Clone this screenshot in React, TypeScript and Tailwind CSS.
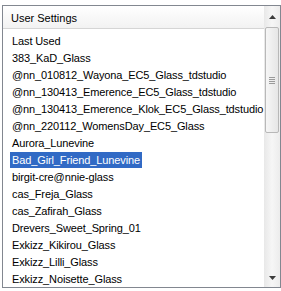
const items = [
  'Last Used',
  '383_KaD_Glass',
  '@nn_010812_Wayona_EC5_Glass_tdstudio',
  '@nn_130413_Emerence_EC5_Glass_tdstudio',
  '@nn_130413_Emerence_Klok_EC5_Glass_tdstudio',
  '@nn_220112_WomensDay_EC5_Glass',
  'Aurora_Lunevine',
  'Bad_Girl_Friend_Lunevine',
  'birgit-cre@nnie-glass',
  'cas_Freja_Glass',
  'cas_Zafirah_Glass',
  'Drevers_Sweet_Spring_01',
  'Exkizz_Kikirou_Glass',
  'Exkizz_Lilli_Glass',
  'Exkizz_Noisette_Glass',
]

const selected = 'Bad_Girl_Friend_Lunevine'

function Arrow({ down = false }: { down?: boolean }) {
  return (
    <svg width="7" height="4" viewBox="0 0 7 4" className={down ? 'rotate-180' : ''}>
      <polygon points="3.5,0 7,4 0,4" fill="#3c3c3c" />
    </svg>
  )
}

export default function App() {
  return (
    <div
      className="w-[281px] h-[291px] bg-white pt-[5px] pl-[2px] overflow-hidden"
      style={{ fontFamily: '"Liberation Sans", Arial, sans-serif' }}
    >
      <div className="w-[279px] h-[283px] border border-[#828790] flex bg-white">
        {/* list column */}
        <div className="flex-1 flex flex-col min-w-0">
          <div className="h-[24px] flex items-center pl-[8px] pt-[3px] text-[11px] text-black bg-[linear-gradient(to_bottom,#ffffff,#f2f2f2)] border-b border-[#d5d5d5]">
            User Settings
          </div>
          <div className="pt-[3px] flex flex-col">
            {items.map((item) => (
              <div key={item} className="h-[17px] flex items-center pl-[7px]">
                <span
                  className={`px-[2px] h-[16px] leading-[16px] text-[11px] tracking-[-0.12px] whitespace-nowrap ${
                    item === selected ? 'bg-[#316ac5] text-white' : 'text-black'
                  }`}
                >
                  {item}
                </span>
              </div>
            ))}
          </div>
        </div>

        {/* scrollbar */}
        <div className="w-[16px] flex flex-col bg-[linear-gradient(to_right,#e8e8e8,#f6f6f6,#ececec)]">
          <div className="h-[21px] flex items-center justify-center">
            <Arrow />
          </div>
          <div className="h-[106px] mx-[1px] rounded-[2px] border border-[#b8b8b8] bg-[linear-gradient(to_right,#f6f6f6,#e6e6e6)] flex flex-col items-center justify-center gap-[1px]">
            <div className="w-[6px] h-[1px] bg-[#9a9a9a]" />
            <div className="w-[6px] h-[1px] bg-[#9a9a9a]" />
            <div className="w-[6px] h-[1px] bg-[#9a9a9a]" />
            <div className="w-[6px] h-[1px] bg-[#9a9a9a]" />
          </div>
          <div className="flex-1" />
          <div className="h-[18px] flex items-center justify-center">
            <Arrow down />
          </div>
        </div>
      </div>
    </div>
  )
}
